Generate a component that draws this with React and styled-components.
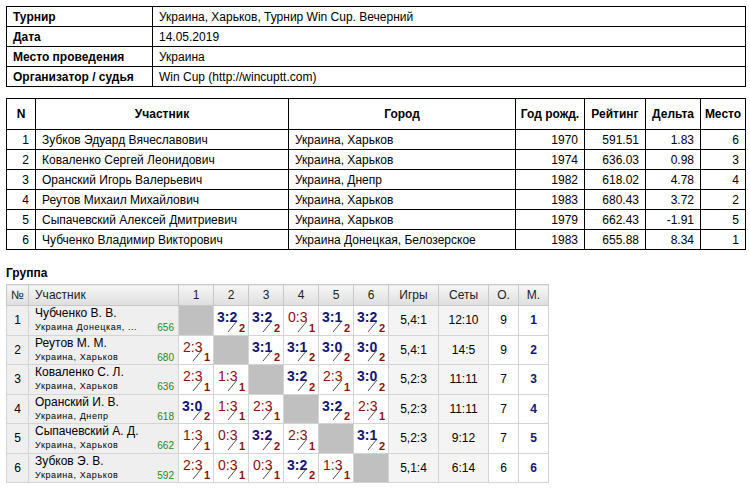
import React from "react";
import styled, { createGlobalStyle } from "styled-components";

const G = createGlobalStyle`
  body{margin:0;background:#fff;font-family:"Liberation Sans",Arial,sans-serif;font-size:12px;color:#000;}
`;
const Page = styled.div`padding:6px 4px 0 6px;width:740px;`;
const InfoTable = styled.table`
  border-collapse:collapse;width:740px;
  td{border:1px solid #000;height:19px;padding:0 6px;font-size:12px;}
  td:first-child{font-weight:bold;width:133px;}
`;
const MainTable = styled.table`
  border-collapse:collapse;width:740px;margin-top:11px;
  td{border:1px solid #000;height:19px;padding:0 6px;font-size:12px;}
`;
const MH = styled.th`border:1px solid #000;height:30px;font-weight:bold;font-size:12px;padding:0 3px;
  ${p=>p.$w?`width:${p.$w}px;`:""}`;
const Num = styled.td`text-align:right;`;
const GroupTitle = styled.div`font-weight:bold;font-size:12px;margin:16px 0 4px;`;
const GTable = styled.table`
  border-collapse:collapse;width:542px;border:1px solid #b4b4b4;table-layout:fixed;
  td{border:1px solid #d4d4d4;height:28.5px;padding:0;font-size:12px;}
`;
const Col = styled.col`width:${p=>p.$w}px;`;
const GH = styled.th`height:20px;font-weight:normal;font-size:12px;color:#222;border:1px solid #c8c8c8;
  background:linear-gradient(#f6f6f6,#dedede);padding:0 0 0 ${p=>p.$left?6:0}px;text-align:${p=>p.$left?"left":"center"};`;
const Idx = styled.td`background:#efefef;text-align:center;`;
const Player = styled.td`background:#efefef;`;
const PName = styled.div`font-size:12px;padding-left:6px;line-height:15px;`;
const PSub = styled.div`display:flex;justify-content:space-between;font-size:9px;letter-spacing:0.6px;padding:0 4px 0 6px;line-height:13px;
  span:last-child{color:#1a8a1a;font-size:10px;letter-spacing:0;}`;
const Diag = styled.td`background:#c0c0c0;`;
const Score = styled.td`position:relative;background:#fff;`;
const ScoreText = styled.div`position:absolute;left:${p=>p.$w?3:4}px;top:3px;font-size:14px;
  font-weight:${p=>p.$w?"bold":"normal"};color:${p=>p.$w?"#151573":"#8b1010"};`;
const Mark = styled.div`position:absolute;right:3px;bottom:1px;font-size:11px;font-weight:bold;color:#8b1010;line-height:11px;`;
const Slash = styled.svg`position:absolute;right:10px;bottom:2px;`;
const Cell = styled.td`text-align:center;background:${p=>p.$bg||"#f4f4f4"};
  ${p=>p.$place?"font-weight:bold;font-size:14px;color:#151573;":""}`;

const info=[["Турнир","Украина, Харьков, Турнир Win Cup. Вечерний"],["Дата","14.05.2019"],["Место проведения","Украина"],["Организатор / судья","Win Cup (http://wincuptt.com)"]];
const rows=[
["Зубков Эдуард Вячеславович","Украина, Харьков","1970","591.51","1.83","6"],
["Коваленко Сергей Леонидович","Украина, Харьков","1974","636.03","0.98","3"],
["Оранский Игорь Валерьевич","Украина, Днепр","1982","618.02","4.78","4"],
["Реутов Михаил Михайлович","Украина, Харьков","1983","680.43","3.72","2"],
["Сыпачевский Алексей Дмитриевич","Украина, Харьков","1979","662.43","-1.91","5"],
["Чубченко Владимир Викторович","Украина Донецкая, Белозерское","1983","655.88","8.34","1"]];
const grp=[
["Чубченко В. В.","Украина Донецкая, ...","656",[null,"3:2","3:2","0:3","3:1","3:2"],"5,4:1","12:10","9","1"],
["Реутов М. М.","Украина, Харьков","680",["2:3",null,"3:1","3:1","3:0","3:0"],"5,4:1","14:5","9","2"],
["Коваленко С. Л.","Украина, Харьков","636",["2:3","1:3",null,"3:2","2:3","3:0"],"5,2:3","11:11","7","3"],
["Оранский И. В.","Украина, Днепр","618",["3:0","1:3","2:3",null,"3:2","2:3"],"5,2:3","11:11","7","4"],
["Сыпачевский А. Д.","Украина, Харьков","662",["1:3","0:3","3:2","2:3",null,"3:1"],"5,2:3","9:12","7","5"],
["Зубков Э. В.","Украина, Харьков","592",["2:3","0:3","0:3","3:2","1:3",null],"5,1:4","6:14","6","6"]];
const K=[1,2,3,4,5,6];

export default function App(){
  return <Page><G/>
    <InfoTable><tbody>{info.map(r=><tr key={r[0]}><td>{r[0]}</td><td>{r[1]}</td></tr>)}</tbody></InfoTable>
    <MainTable><thead><tr>
      <MH $w={22}>N</MH><MH $w={246}>Участник</MH><MH>Город</MH><MH $w={62}>Год рожд.</MH><MH $w={54}>Рейтинг</MH><MH $w={48}>Дельта</MH><MH $w={38}>Место</MH>
    </tr></thead><tbody>{rows.map((r,i)=><tr key={i}>
      <Num>{i+1}</Num><td>{r[0]}</td><td>{r[1]}</td><Num>{r[2]}</Num><Num>{r[3]}</Num><Num>{r[4]}</Num><Num>{r[5]}</Num>
    </tr>)}</tbody></MainTable>
    <GroupTitle>Группа</GroupTitle>
    <GTable><colgroup><Col $w={22}/><Col $w={150}/>{K.map(k=><Col key={k} $w={35}/>)}<Col $w={50}/><Col $w={50}/><Col $w={30}/><Col $w={30}/></colgroup>
      <thead><tr><GH>№</GH><GH $left>Участник</GH>{K.map(k=><GH key={k}>{k}</GH>)}<GH>Игры</GH><GH>Сеты</GH><GH>О.</GH><GH>М.</GH></tr></thead>
      <tbody>{grp.map((g,i)=><tr key={i}>
        <Idx>{i+1}</Idx>
        <Player><PName>{g[0]}</PName><PSub><span>{g[1]}</span><span>{g[2]}</span></PSub></Player>
        {g[3].map((s,j)=>{ if(!s) return <Diag key={j}/>; const w=s[0]==="3";
          return <Score key={j}><ScoreText $w={w}>{s}</ScoreText>
            <Slash width="11" height="13" viewBox="0 0 11 13"><line x1="1" y1="12" x2="10" y2="1" stroke="#222" strokeWidth="0.8"/></Slash>
            <Mark>{w?2:1}</Mark></Score>;})}
        <Cell>{g[4]}</Cell><Cell>{g[5]}</Cell><Cell $bg="#fff">{g[6]}</Cell><Cell $bg="#fff" $place>{g[7]}</Cell>
      </tr>)}</tbody>
    </GTable>
  </Page>;
}
